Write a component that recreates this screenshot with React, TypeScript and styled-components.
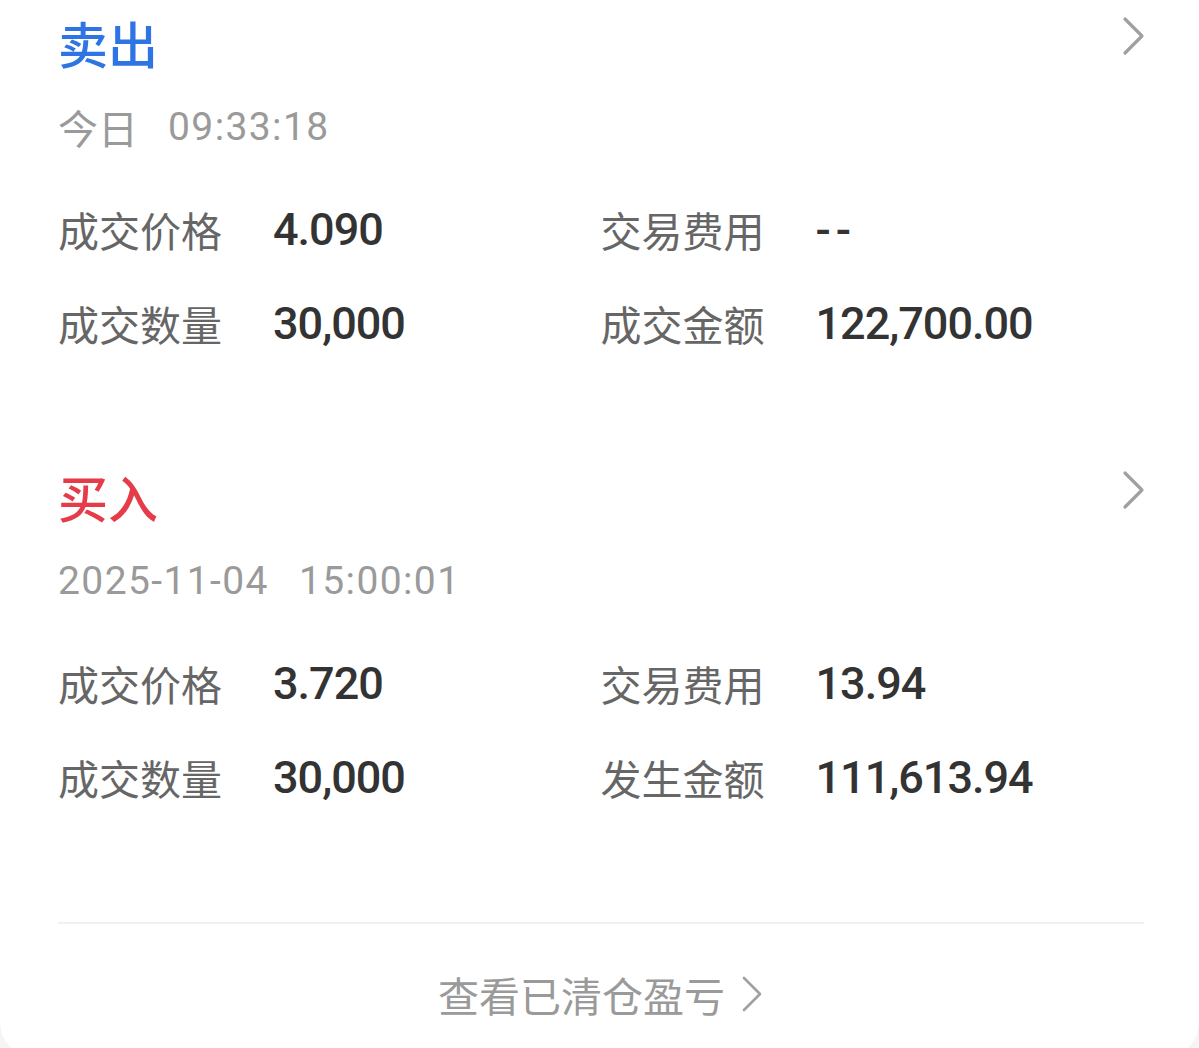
import React from 'react';
import styled, { createGlobalStyle } from 'styled-components';

const GlobalStyle = createGlobalStyle`
  html, body {
    margin: 0;
    padding: 0;
    background: #f5f5f5;
  }
  * {
    box-sizing: border-box;
  }
`;

const CJK = `"Noto Sans CJK SC", "Noto Sans", sans-serif`;
const NUM = `Roboto, "Noto Sans CJK SC", sans-serif`;

const Card = styled.div`
  width: 1199px;
  height: 1058px;
  background: #fff;
  border-radius: 0 0 36px 36px;
  padding: 12px 56px 0 58px;
  display: flex;
  flex-direction: column;
`;

const Section = styled.section<{ $gap?: number }>`
  display: flex;
  flex-direction: column;
  margin-top: ${p => p.$gap ?? 0}px;
`;

const Header = styled.div`
  display: flex;
  align-items: center;
  justify-content: space-between;
  height: 60px;
`;

const Side = styled.h2<{ $color: string }>`
  margin: 0;
  font-family: ${CJK};
  font-size: 50px;
  font-weight: 500;
  line-height: 60px;
  color: ${p => p.$color};
`;

const Arrow = styled.svg`
  width: 24px;
  height: 40px;
  margin-right: -2px;
  margin-top: -12px;
`;

const TimeLine = styled.div`
  display: flex;
  gap: 30px;
  margin-top: 33px;
  height: 44px;
  align-items: center;
  color: #9a9a9a;
`;

const TimeCJK = styled.span`
  font-family: ${CJK};
  font-size: 40px;
`;

const TimeNum = styled.span`
  font-family: ${NUM};
  font-size: 39px;
  letter-spacing: 1.4px;
`;

const Grid = styled.div`
  display: grid;
  grid-template-columns: 1fr 1fr;
  row-gap: 44px;
  margin-top: 55px;
`;

const Field = styled.div`
  display: flex;
  align-items: center;
  height: 50px;
`;

const Label = styled.span`
  width: 215px;
  flex-shrink: 0;
  font-family: ${CJK};
  font-size: 41px;
  color: #666;
`;

const Value = styled.span<{ $spaced?: boolean }>`
  font-family: ${NUM};
  font-size: 45px;
  font-weight: 500;
  letter-spacing: ${p => (p.$spaced ? '5px' : '-1px')};
  color: #333;
`;

const Divider = styled.div`
  height: 2px;
  background: #f0f0f0;
  margin-top: 120px;
  margin-right: -1px;
`;

const Footer = styled.div`
  display: flex;
  align-items: center;
  justify-content: center;
  gap: 16px;
  height: 50px;
  margin-top: 45px;
  font-family: ${CJK};
  font-size: 41px;
  color: #9a9a9a;
`;

const FooterArrow = styled.svg`
  width: 22px;
  height: 38px;
`;

const Chevron = () => (
  <Arrow viewBox="0 0 24 40">
    <polyline points="4,3 21,20 4,37" fill="none" stroke="#a0a0a0" strokeWidth="3.2" strokeLinecap="round" strokeLinejoin="round" />
  </Arrow>
);

type Trade = {
  side: string;
  color: string;
  date: string;
  dateIsCJK?: boolean;
  time: string;
  fields: [string, string][];
};

const trades: Trade[] = [
  {
    side: '卖出',
    color: '#2f74e4',
    date: '今日',
    dateIsCJK: true,
    time: '09:33:18',
    fields: [
      ['成交价格', '4.090'],
      ['交易费用', '--'],
      ['成交数量', '30,000'],
      ['成交金额', '122,700.00'],
    ],
  },
  {
    side: '买入',
    color: '#e63b48',
    date: '2025-11-04',
    time: '15:00:01',
    fields: [
      ['成交价格', '3.720'],
      ['交易费用', '13.94'],
      ['成交数量', '30,000'],
      ['发生金额', '111,613.94'],
    ],
  },
];

export default function App() {
  return (
    <>
      <GlobalStyle />
      <Card>
        {trades.map((t, i) => (
          <Section key={t.side} $gap={i === 0 ? 0 : 118}>
            <Header>
              <Side $color={t.color}>{t.side}</Side>
              <Chevron />
            </Header>
            <TimeLine>
              {t.dateIsCJK ? <TimeCJK>{t.date}</TimeCJK> : <TimeNum>{t.date}</TimeNum>}
              <TimeNum>{t.time}</TimeNum>
            </TimeLine>
            <Grid>
              {t.fields.map(([label, value]) => (
                <Field key={label}>
                  <Label>{label}</Label>
                  <Value $spaced={value === '--'}>{value}</Value>
                </Field>
              ))}
            </Grid>
          </Section>
        ))}
        <Divider />
        <Footer>
          <span>查看已清仓盈亏</span>
          <FooterArrow viewBox="0 0 22 38">
            <polyline points="3,3 19,19 3,35" fill="none" stroke="#a0a0a0" strokeWidth="2.6" strokeLinecap="round" strokeLinejoin="round" />
          </FooterArrow>
        </Footer>
      </Card>
    </>
  );
}
